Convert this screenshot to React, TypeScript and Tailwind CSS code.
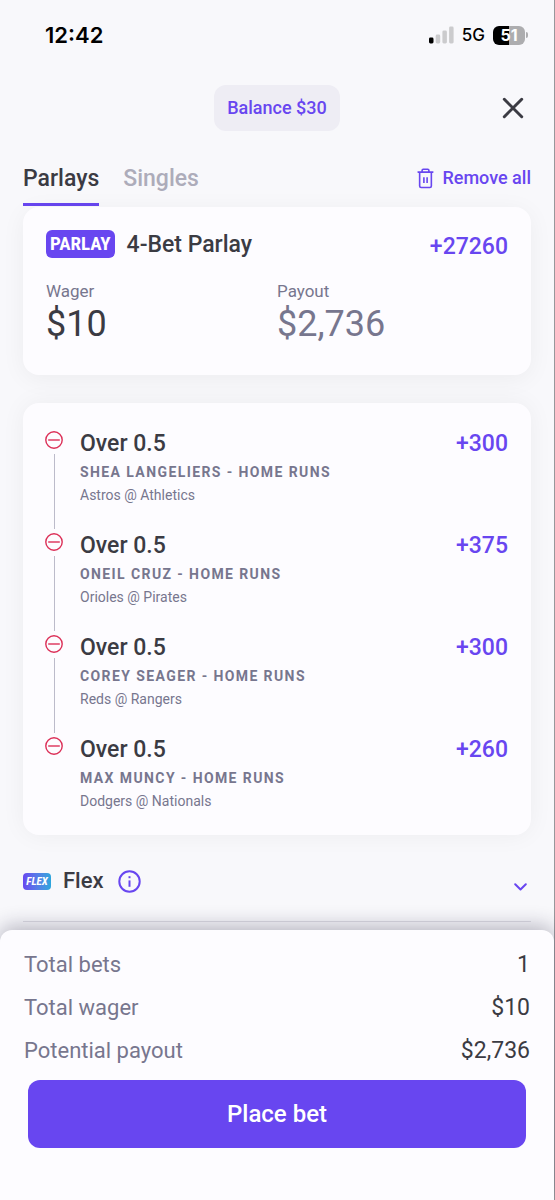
import { useState } from 'react';

type Leg = { id: number; player: string; game: string; odds: string };

const legs: Leg[] = [
  { id: 1, player: 'Shea Langeliers', game: 'Astros @ Athletics', odds: '+300' },
  { id: 2, player: 'Oneil Cruz', game: 'Orioles @ Pirates', odds: '+375' },
  { id: 3, player: 'Corey Seager', game: 'Reds @ Rangers', odds: '+300' },
  { id: 4, player: 'Max Muncy', game: 'Dodgers @ Nationals', odds: '+260' },
];

const totals = [
  { label: 'Total bets', value: '1' },
  { label: 'Total wager', value: '$10' },
  { label: 'Potential payout', value: '$2,736' },
];

function SignalIcon() {
  return (
    <svg className="h-[18px] w-[25px]" viewBox="0 0 25 18" aria-hidden="true">
      <rect x="0" y="11.5" width="4.5" height="6" rx="1.4" fill="#000" />
      <rect x="6.7" y="8.5" width="4.5" height="9" rx="1.4" fill="#cbcbcd" />
      <rect x="13.4" y="4.5" width="4.5" height="13" rx="1.4" fill="#cbcbcd" />
      <rect x="20.1" y="0.5" width="4.5" height="17" rx="1.4" fill="#cbcbcd" />
    </svg>
  );
}

function Battery() {
  return (
    <div className="flex items-center gap-px">
      <div className="flex h-[19px] w-8 items-center justify-center rounded-md bg-linear-to-r from-black from-50% to-[#adadaf] to-50% font-['Inter',sans-serif] text-base leading-none font-bold text-white">
        51
      </div>
      <div className="h-1.5 w-0.5 rounded-r-full bg-[#adadaf]" />
    </div>
  );
}

function TrashIcon() {
  return (
    <svg className="h-[21px] w-[17px]" viewBox="0 0 18 22" fill="none" stroke="#6846f0" strokeWidth="1.7" aria-hidden="true">
      <path d="M1.2 4.2h15.6" strokeLinecap="round" />
      <path d="M5.4 4V2.4a1.2 1.2 0 0 1 1.2-1.2h4.8a1.2 1.2 0 0 1 1.2 1.2V4" />
      <path d="M2.8 4.4v14.6a1.6 1.6 0 0 0 1.6 1.6h9.2a1.6 1.6 0 0 0 1.6-1.6V4.4" />
      <path d="M7.3 9.6v6.2M10.7 9.6v6.2" />
    </svg>
  );
}

function CloseIcon() {
  return (
    <svg className="size-[22px]" viewBox="0 0 22 22" fill="none" stroke="#3b3b43" strokeWidth="3" strokeLinecap="round" aria-hidden="true">
      <path d="M2.3 2.3l17.4 17.4M19.7 2.3L2.3 19.7" />
    </svg>
  );
}

function RemoveIcon() {
  return (
    <svg className="size-[18px]" viewBox="0 0 18 18" fill="none" stroke="#dc3058" strokeWidth="1.4" aria-hidden="true">
      <circle cx="9" cy="9" r="8.2" />
      <path d="M3.2 9h11.6" />
    </svg>
  );
}

function InfoIcon() {
  return (
    <svg className="size-[23px]" viewBox="0 0 23 23" fill="none" stroke="#6846f0" strokeWidth="2" aria-hidden="true">
      <circle cx="11.5" cy="11.5" r="10.2" />
      <path d="M11.5 10.4v6.4" />
      <path d="M11.5 6.2v2" />
    </svg>
  );
}

function ChevronIcon() {
  return (
    <svg className="h-2 w-[13px]" viewBox="0 0 13 8" fill="none" stroke="#6846f0" strokeWidth="2" strokeLinecap="round" strokeLinejoin="round" aria-hidden="true">
      <path d="M1.2 1.2l5.3 5.3 5.3-5.3" />
    </svg>
  );
}

function LegRow({ leg, last }: { leg: Leg; last: boolean }) {
  return (
    <li className="flex gap-[17px]">
      <div className="flex w-[18px] flex-col items-center gap-[5px]">
        <button type="button" aria-label={`Remove ${leg.player}`} className="block">
          <RemoveIcon />
        </button>
        {!last && <div className="mb-1 w-px grow bg-[#bcbbca]" />}
      </div>
      <div className={last ? 'grow' : 'grow pb-[27px]'}>
        <div className="flex items-center justify-between text-[23px] leading-[26px] font-medium">
          <h3 className="text-[#3b3b43]">Over 0.5</h3>
          <span className="text-[#6846f0]">{leg.odds}</span>
        </div>
        <p className="mt-[3px] text-sm leading-6 font-bold tracking-widest text-[#77768e] uppercase">
          {leg.player} - Home Runs
        </p>
        <p className="text-sm leading-[22px] text-[#77768e]">{leg.game}</p>
      </div>
    </li>
  );
}

export default function App() {
  const [tab, setTab] = useState('Parlays');
  const [wager, setWager] = useState('10');

  return (
    <div className="flex min-h-screen flex-col border-r border-[#97979b] bg-[#f8f8fb] font-['Roboto',sans-serif]">
      <div className="flex items-center justify-between pt-[19px] pr-[26px] pl-[45px] font-['Inter',sans-serif] text-black">
        <span className="text-[22px] leading-8 font-semibold">12:42</span>
        <div className="flex items-center gap-2">
          <SignalIcon />
          <span className="text-[17px] leading-8 font-medium">5G</span>
          <Battery />
        </div>
      </div>

      <header className="mt-[34px] grid grid-cols-[1fr_auto_1fr] items-center px-[30px]">
        <div className="col-start-2 rounded-xl bg-[#eeedf4] px-[13px] py-[9px] text-lg leading-7 font-medium text-[#6846f0]">
          Balance $30
        </div>
        <button type="button" aria-label="Close" className="justify-self-end">
          <CloseIcon />
        </button>
      </header>

      <nav className="mt-[33px] flex items-start justify-between px-[23px]">
        <div className="flex gap-6 text-[23px] leading-[30px] font-medium">
          {['Parlays', 'Singles'].map((name) => (
            <button
              key={name}
              type="button"
              onClick={() => setTab(name)}
              className={
                tab === name
                  ? 'border-b-3 border-[#6846f0] pb-[9px] text-[#3b3b43]'
                  : 'border-b-3 border-transparent pb-[9px] text-[#adacba]'
              }
            >
              {name}
            </button>
          ))}
        </div>
        <button type="button" className="flex items-center gap-2 text-lg leading-7 font-medium text-[#6846f0]">
          <TrashIcon />
          Remove all
        </button>
      </nav>

      <main className="mt-px px-[23px]">
        <section className="rounded-2xl bg-[#fdfcff] px-[23px] pt-[23px] pb-[30px] shadow-[0_4px_24px_rgba(0,0,0,0.05)]">
          <div className="flex items-start justify-between">
            <div className="flex items-start gap-3">
              <span className="rounded-md bg-[#6846f0] px-1 font-['Liberation_Sans_Narrow','Roboto_Condensed','Roboto',sans-serif] text-[19px] leading-7 font-bold text-white">
                PARLAY
              </span>
              <h2 className="text-[23px] leading-[30px] font-medium text-[#3b3b43]">4-Bet Parlay</h2>
            </div>
            <span className="pt-0.5 text-[23px] leading-[30px] font-medium text-[#6846f0]">+27260</span>
          </div>
          <div className="mt-[17px] grid grid-cols-2">
            <div>
              <label htmlFor="wager" className="block text-[17px] leading-6 text-[#77768e]">Wager</label>
              <div className="flex text-4xl leading-[42px] text-[#3b3b43]">
                <span>$</span>
                <input
                  id="wager"
                  inputMode="numeric"
                  value={wager}
                  onChange={(e) => setWager(e.target.value)}
                  className="w-32 bg-transparent p-0 outline-none"
                />
              </div>
            </div>
            <div>
              <div className="text-[17px] leading-6 text-[#77768e]">Payout</div>
              <div className="text-4xl leading-[42px] text-[#77768e]">$2,736</div>
            </div>
          </div>
        </section>

        <ul className="mt-7 rounded-2xl bg-[#fdfcff] pt-7 pr-[23px] pb-[23px] pl-[22px] shadow-[0_0_24px_rgba(0,0,0,0.05)]">
          {legs.map((leg, i) => (
            <LegRow key={leg.id} leg={leg} last={i === legs.length - 1} />
          ))}
        </ul>

        <section className="mt-8 flex items-center border-b border-[#dddce4] pb-[26px]">
          <span className="flex h-[17px] w-7 items-center justify-center rounded-sm bg-linear-to-r from-[#6846f0] to-[#2ba6dc] font-['Liberation_Sans_Narrow','Roboto_Condensed','Roboto',sans-serif] text-[11px] leading-none font-bold text-white italic">
            FLEX
          </span>
          <h2 className="ml-3 text-[22px] leading-7 font-medium text-[#3b3b43]">Flex</h2>
          <button type="button" aria-label="About Flex" className="ml-3.5">
            <InfoIcon />
          </button>
          <button type="button" aria-label="Expand Flex" className="mr-1 ml-auto pt-3">
            <ChevronIcon />
          </button>
        </section>
      </main>

      <footer className="mt-2 grow rounded-t-xl bg-[#fdfcff] px-6 pt-[13px] pb-[52px] shadow-[0_-4px_20px_rgba(30,25,60,0.3)]">
        <dl>
          {totals.map((row) => (
            <div key={row.label} className="flex justify-between leading-[43px]">
              <dt className="text-[22px] text-[#77768e]">{row.label}</dt>
              <dd className="text-[23px] text-[#3b3b43]">{row.value}</dd>
            </div>
          ))}
        </dl>
        <div className="px-1 pt-2">
          <button type="button" className="w-full rounded-xl bg-[#6846f0] py-5 text-2xl leading-7 font-medium text-white">
            Place bet
          </button>
        </div>
      </footer>
    </div>
  );
}
